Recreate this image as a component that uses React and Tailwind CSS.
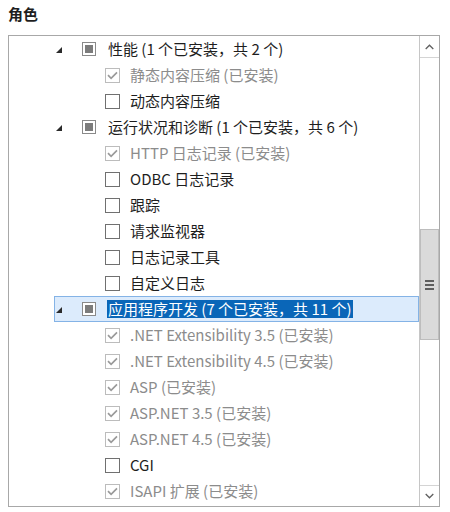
import React from "react";

const rows = [
  { type: "group", label: "性能 (1 个已安装，共 2 个)" },
  { type: "item", label: "静态内容压缩 (已安装)", installed: true },
  { type: "item", label: "动态内容压缩" },
  { type: "group", label: "运行状况和诊断 (1 个已安装，共 6 个)" },
  { type: "item", label: "HTTP 日志记录 (已安装)", installed: true },
  { type: "item", label: "ODBC 日志记录" },
  { type: "item", label: "跟踪" },
  { type: "item", label: "请求监视器" },
  { type: "item", label: "日志记录工具" },
  { type: "item", label: "自定义日志" },
  { type: "group", label: "应用程序开发 (7 个已安装，共 11 个)", selected: true },
  { type: "item", label: ".NET Extensibility 3.5 (已安装)", installed: true },
  { type: "item", label: ".NET Extensibility 4.5 (已安装)", installed: true },
  { type: "item", label: "ASP (已安装)", installed: true },
  { type: "item", label: "ASP.NET 3.5 (已安装)", installed: true },
  { type: "item", label: "ASP.NET 4.5 (已安装)", installed: true },
  { type: "item", label: "CGI" },
  { type: "item", label: "ISAPI 扩展 (已安装)", installed: true },
];

function Expander() {
  return (
    <svg width="6" height="6" viewBox="0 0 6 6" className="block">
      <polygon points="6,0 6,6 0,6" fill="#2b2b2b" />
    </svg>
  );
}

function PartialBox() {
  return (
    <div className="w-[14px] h-[14px] border border-[#8a8a8a] bg-white flex items-center justify-center">
      <div className="w-[8px] h-[8px] bg-[#7c7c7c]" />
    </div>
  );
}

function CheckBox({ checked }) {
  if (checked) {
    return (
      <div className="w-[15px] h-[15px] border border-[#bcbcbc] bg-white flex items-center justify-center">
        <svg width="11" height="9" viewBox="0 0 11 9" className="block">
          <path d="M1 4.2 L4.1 7.3 L10 1.3" fill="none" stroke="#9a9a9a" strokeWidth="1.7" />
        </svg>
      </div>
    );
  }
  return <div className="w-[15px] h-[15px] border border-[#707070] bg-white" />;
}

function GroupRow({ label, selected }) {
  return (
    <div
      className={
        "h-[26px] ml-[45px] flex items-center pl-[1px] border " +
        (selected ? "border-[#84b3e6] bg-[#dcebfc]" : "border-transparent")
      }
    >
      <div className="pt-[2px]">
        <Expander />
      </div>
      <div className="ml-[20px]">
        <PartialBox />
      </div>
      <span
        className={
          "ml-[11px] px-px leading-[18px] " +
          (selected ? "bg-[#0a66b8] text-white" : "text-[#1e1e1e]")
        }
      >
        {label}
      </span>
    </div>
  );
}

function ItemRow({ label, installed }) {
  return (
    <div className="h-[26px] ml-[45px] flex items-center pl-[50px] border border-transparent">
      <CheckBox checked={installed} />
      <span className={"ml-[10px] leading-[18px] " + (installed ? "text-[#8c8c8c]" : "text-[#1e1e1e]")}>
        {label}
      </span>
    </div>
  );
}

function ScrollBar() {
  return (
    <div className="w-[20px] border-l border-[#c6c6c6] flex flex-col bg-white">
      <div className="h-[22px] border-b border-[#d4d4d4] flex items-center justify-center">
        <svg width="9" height="6" viewBox="0 0 9 6" className="block">
          <path d="M0.7 5 L4.5 1.2 L8.3 5" fill="none" stroke="#606060" strokeWidth="1.3" />
        </svg>
      </div>
      <div className="h-[171px]" />
      <div className="h-[111px] bg-[#dadada] border-x border-y border-[#bdbdbd] flex flex-col items-center justify-center gap-[2px]">
        <div className="w-[9px] h-[2px] bg-[#5f5f5f]" />
        <div className="w-[9px] h-[2px] bg-[#5f5f5f]" />
        <div className="w-[9px] h-[2px] bg-[#5f5f5f]" />
      </div>
      <div className="flex-1" />
      <div className="h-[21px] border-t border-[#d4d4d4] flex items-center justify-center">
        <svg width="9" height="6" viewBox="0 0 9 6" className="block">
          <path d="M0.7 1 L4.5 4.8 L8.3 1" fill="none" stroke="#606060" strokeWidth="1.3" />
        </svg>
      </div>
    </div>
  );
}

export default function App() {
  return (
    <div className="w-[450px] h-[512px] bg-white overflow-hidden font-['Microsoft_YaHei','Noto_Sans_CJK_SC',sans-serif] text-[15px]">
      <div className="h-[35px] pl-[8px] pt-[4px] text-[15px] font-bold text-[#1e1e1e] leading-[20px]">角色</div>
      <div className="ml-[8px] w-[432px] h-[472px] border border-[#a8a8a8] flex">
        <div className="flex-1 overflow-hidden">
          {rows.map((r, i) =>
            r.type === "group" ? (
              <GroupRow key={i} label={r.label} selected={r.selected} />
            ) : (
              <ItemRow key={i} label={r.label} installed={r.installed} />
            )
          )}
        </div>
        <ScrollBar />
      </div>
    </div>
  );
}
